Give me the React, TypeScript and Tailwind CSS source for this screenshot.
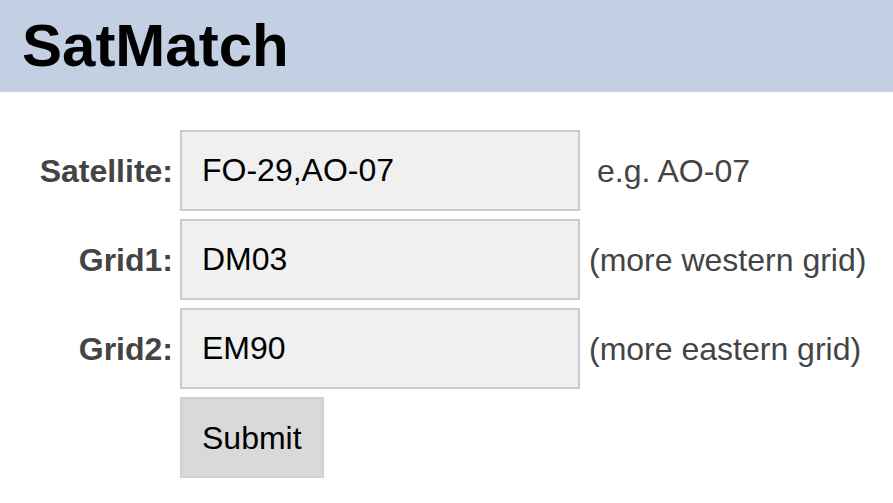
import { useState } from 'react'

const rows = [
  { id: 'sat', label: 'Satellite:', value: 'FO-29,AO-07', hint: 'e.g. AO-07', hintClass: 'ml-[10px]' },
  { id: 'grid1', label: 'Grid1:', value: 'DM03', hint: '(more western grid)', hintClass: 'ml-[2px]' },
  { id: 'grid2', label: 'Grid2:', value: 'EM90', hint: '(more eastern grid)', hintClass: 'ml-[2px]' },
]

export default function App() {
  const [values, setValues] = useState<Record<string, string>>(() =>
    Object.fromEntries(rows.map((r) => [r.id, r.value])),
  )

  return (
    <div className="min-h-screen bg-white font-['Liberation_Sans',Arial,sans-serif]">
      <header className="flex h-[92px] items-center bg-[#c3cfe2] px-[22px]">
        <h1 className="text-[60px] font-bold leading-none text-black">SatMatch</h1>
      </header>

      <form
        className="mt-[38px] grid grid-cols-[173px_400px_auto] items-center gap-x-[7px] gap-y-[8px] text-[32px]"
        onSubmit={(e) => e.preventDefault()}
      >
        {rows.map((row) => (
          <div key={row.id} className="contents">
            <label htmlFor={row.id} className="text-right font-bold text-[#444]">
              {row.label}
            </label>
            <input
              id={row.id}
              type="text"
              value={values[row.id]}
              onChange={(e) => setValues((v) => ({ ...v, [row.id]: e.target.value }))}
              className="h-[81px] w-[400px] border-2 border-[#ccc] bg-[#f0f0f0] px-[20px] text-black outline-none"
            />
            <span className={`${row.hintClass} whitespace-nowrap text-[#444]`}>{row.hint}</span>
          </div>
        ))}
        <div />
        <div>
          <button
            type="submit"
            className="h-[81px] border-2 border-[#d0d0d0] bg-[#d9d9d9] px-[20px] text-black"
          >
            Submit
          </button>
        </div>
        <div />
      </form>
    </div>
  )
}
